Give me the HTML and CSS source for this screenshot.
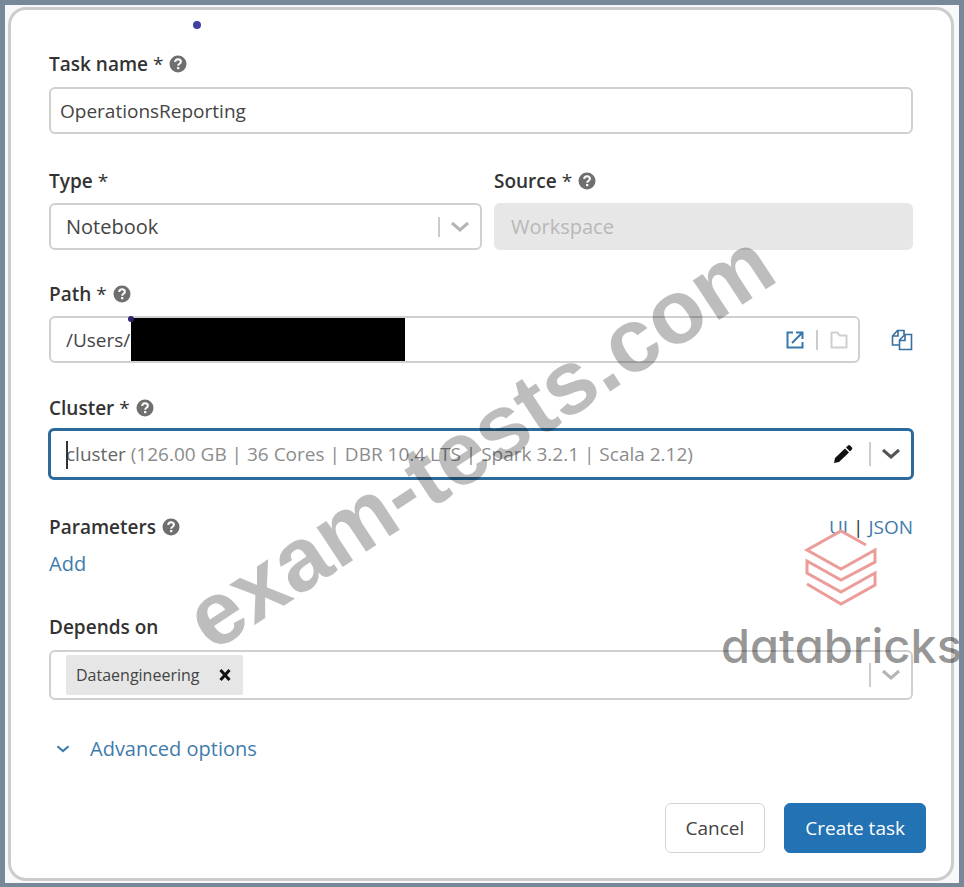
FILE: index.html
```html
<!DOCTYPE html>
<html lang="en">
<head>
<meta charset="utf-8">
<title>Create task</title>
<link rel="stylesheet" href="styles.css">
</head>
<body>
<svg class="defs" aria-hidden="true">
  <symbol id="help" viewBox="0 0 18 18">
    <circle cx="9" cy="9" r="8.5" fill="#6f6f6f"/>
    <path d="M6.2 7C6.3 5.1 7.4 4.3 9 4.3c1.700 0 2.900 1 2.900 2.500 0 2-2.700 2-2.700 3.900" fill="none" stroke="#fff" stroke-width="2"/>
    <rect x="8.100" y="12" width="2.200" height="2.200" fill="#fff"/>
  </symbol>
  <symbol id="chevron" viewBox="0 0 20 12">
    <path d="M2 2l8 7 8-7" fill="none" stroke="currentColor" stroke-width="3"/>
  </symbol>
</svg>
<main class="panel">
  <span class="dot"></span>
  <form class="form">
    <div class="field field-name">
      <div class="label-row"><label for="task-name">Task name <span class="star">*</span></label><svg class="help"><use href="#help"/></svg></div>
      <input class="control text-input" id="task-name" type="text" value="OperationsReporting">
    </div>

    <div class="columns">
      <div class="field">
        <div class="label-row"><label for="type">Type <span class="star">*</span></label></div>
        <div class="control">
          <select class="select" id="type"><option>Notebook</option></select>
          <span class="divider"></span><svg class="chevron"><use href="#chevron"/></svg>
        </div>
      </div>
      <div class="field">
        <div class="label-row"><label for="source">Source <span class="star">*</span></label><svg class="help"><use href="#help"/></svg></div>
        <div class="control control-disabled">
          <select class="select" id="source" disabled><option>Workspace</option></select>
        </div>
      </div>
    </div>

    <div class="field field-path">
      <div class="label-row"><label for="path">Path <span class="star">*</span></label><svg class="help"><use href="#help"/></svg></div>
      <div class="path-row">
        <div class="control">
          <input class="path-input" id="path" type="text" value="/Users/">
          <span class="redacted"><span class="dot-small"></span></span>
          <button class="icon-button push" type="button" aria-label="Open">
            <svg width="18" height="18" viewBox="0 0 18 18" fill="none" stroke="#3778ad" stroke-width="2"><path d="M7 1.500H1.500v15h15V11M10 1.500h6.500V8M16 2L6 12"/></svg>
          </button>
          <span class="divider"></span>
          <button class="icon-button" type="button" aria-label="Browse">
            <svg width="18" height="18" viewBox="0 0 18 18" fill="none" stroke="#cfcfcf" stroke-width="2"><path d="M1.500 16.500v-15h6l2 3h7v12z" stroke-linejoin="round"/></svg>
          </button>
        </div>
        <button class="icon-button" type="button" aria-label="Copy path">
          <svg width="22" height="22" viewBox="0 0 22 22" fill="none" stroke="#376f9f" stroke-width="1.600"><path d="M8 16H1.500V7l5-5.500H13V6M1.500 7H7V1.500M8.500 20.500V11L14 5.500h6.500v15zM8.500 11.500H14v-6"/></svg>
        </button>
      </div>
    </div>

    <div class="field field-cluster">
      <div class="label-row"><label for="cluster">Cluster <span class="star">*</span></label><svg class="help"><use href="#help"/></svg></div>
      <div class="control control-focus">
        <input class="combo-input" id="cluster" type="text" role="combobox" aria-expanded="false">
        <span class="combo-value"><span class="combo-name">cluster</span> (126.00 GB | 36 Cores | DBR 10.4 LTS | Spark 3.2.1 | Scala 2.12)</span>
        <button class="icon-button push" type="button" aria-label="Edit cluster">
          <svg width="20" height="20" viewBox="0 0 20 20" fill="#111"><path d="M1 19l1-5L12 4.500l4 4L6 18zM13 3.500l2-2q1-1 2 0l2 2q.8 1 0 1.800L17 7.500z"/></svg>
        </button>
        <span class="divider divider-wide"></span><svg class="chevron chevron-dark"><use href="#chevron"/></svg>
      </div>
    </div>

    <div class="parameters">
      <div class="label-row"><span>Parameters</span><svg class="help"><use href="#help"/></svg>
        <span class="modes"><a href="#ui">UI</a> | <a href="#json">JSON</a></span>
      </div>
      <a class="add" href="#add">Add</a>
    </div>

    <div class="field field-depends">
      <div class="label-row"><label for="depends">Depends on</label></div>
      <div class="control control-tags">
        <span class="tag">Dataengineering
          <button class="icon-button" type="button" aria-label="Remove Dataengineering"><svg width="12" height="12" viewBox="0 0 12 12" stroke="#111" stroke-width="3"><path d="M1.500 1l9 10M10.500 1l-9 10"/></svg></button>
        </span>
        <input class="tag-input" id="depends" type="text">
        <span class="divider divider-wide"></span><svg class="chevron"><use href="#chevron"/></svg>
      </div>
    </div>

    <a class="advanced" href="#advanced"><svg class="chevron-small"><use href="#chevron"/></svg>Advanced options</a>

    <div class="actions">
      <button class="button" type="button">Cancel</button>
      <button class="button button-primary" type="submit">Create task</button>
    </div>
  </form>
</main>
<svg class="overlay" viewBox="0 0 964 887" aria-hidden="true">
  <text class="watermark" transform="translate(212 653) rotate(-33.300)">exam-tests.com</text>
  <path d="M866 545L841 531L807 550L841 569L875 550V562L841 580L807 561V573L841 592L875 573V585L841 604L807 584" class="brand-mark"/>
  <text class="brand" x="721" y="663">databricks</text>
</svg>
</body>
</html>
```
FILE: styles.css
```css
* { box-sizing: border-box; }

body {
  margin: 0;
  min-height: 100vh;
  position: relative;
  padding: 2px 5px 2px 3px;
  border: 5px solid #778899;
  background: #f8f8f8;
  font: 20px/28px "Open Sans", "Noto Sans", sans-serif;
  color: #444;
}

.defs { display: none; }

input, select, button {
  margin: 0;
  padding: 0;
  border: 0;
  outline: 0;
  background: none;
  font: inherit;
  color: inherit;
}

a { color: #3f7cac; text-decoration: none; }

.panel {
  position: relative;
  padding: 40px 38px 25px;
  border: 3px solid #ccc;
  border-radius: 18px;
  background: #fff;
}

.dot {
  position: absolute;
  left: 182px;
  top: 11px;
  width: 8px;
  height: 8px;
  border-radius: 50%;
  background: #4040a0;
}

.form { display: flex; flex-direction: column; }

.field { display: flex; flex-direction: column; gap: 8px; min-width: 0; }
.field-name { gap: 9px; }

.label-row {
  display: flex;
  align-items: center;
  gap: 6px;
  height: 28px;
  font-size: 19px;
  font-weight: 600;
  color: #333;
}

.star { font-weight: 400; }
.help { width: 18px; height: 18px; }

.control {
  display: flex;
  align-items: center;
  width: 100%;
  min-width: 0;
  height: 47px;
  padding: 0 10px 0 15px;
  border: 2px solid #d0d0d0;
  border-radius: 6px;
  background: #fff;
}

.text-input { padding: 0 9px; font-size: 19px; }

.columns {
  display: grid;
  grid-template-columns: 433fr 419fr;
  gap: 12px;
  margin-top: 33px;
}

.select { flex: 1; min-width: 0; appearance: none; opacity: 1; }
.control-disabled { background: #e7e7e7; border-color: #e7e7e7; color: #b8b8b8; }

.divider { width: 2px; height: 20px; margin: 0 10px; background: #ccc; }
.divider-wide { height: 24px; }
.chevron { width: 20px; height: 12px; color: #b5b5b5; }
.chevron-dark { color: #555; }

.field-path { margin-top: 30px; }
.path-row { display: flex; align-items: center; gap: 31px; }
.path-row .control { flex: 1; }
.path-row .divider { margin: 0 12px; }
.path-input { width: 65px; font-size: 19px; }
.redacted { position: relative; width: 274px; height: 43px; background: #000; }

.dot-small {
  position: absolute;
  left: -3px;
  top: -2px;
  width: 6px;
  height: 6px;
  border-radius: 50%;
  background: #2b2470;
}

.icon-button { display: flex; flex: none; cursor: pointer; }
.push { margin-left: auto; }

.field-cluster { margin-top: 31px; gap: 6px; }

.control-focus {
  position: relative;
  height: 52px;
  width: auto;
  margin: 0 -1px;
  border: 3px solid #2b6a9b;
  color: #8c8c8c;
  font-size: 19px;
}

.combo-input {
  position: absolute;
  left: 15px;
  top: 10px;
  width: 80%;
  height: 28px;
  border-left: 2px solid #333;
}

.combo-name { color: #666; }
.combo-value { white-space: nowrap; }
.control-focus .divider { margin-left: 16px; }

.parameters { margin-top: 33px; display: flex; flex-direction: column; gap: 9px; }
.modes { margin-left: auto; font-weight: 400; }
.add { align-self: flex-start; }

.field-depends { margin-top: 35px; gap: 9px; }
.control-tags { height: 50px; }

.tag {
  display: flex;
  align-items: center;
  gap: 20px;
  height: 40px;
  padding: 0 12px 0 10px;
  border-radius: 2px;
  background: #e6e6e6;
  font-size: 16px;
}

.tag-input { flex: 1; min-width: 0; }

.advanced {
  display: flex;
  align-items: center;
  align-self: flex-start;
  gap: 20px;
  margin-top: 35px;
  padding-left: 7px;
}

.chevron-small { width: 14px; height: 10px; }

.actions {
  display: flex;
  justify-content: flex-end;
  gap: 19px;
  margin: 40px -13px 0 0;
}

.button {
  height: 50px;
  padding: 0 20px;
  border: 1px solid #d4d4d4;
  border-radius: 6px;
  background: #fff;
  font-size: 19px;
}

.button-primary {
  border-color: #2272b4;
  background: #2272b4;
  color: #fff;
}

.overlay {
  position: absolute;
  left: -5px;
  top: -5px;
  width: calc(100% + 10px);
  pointer-events: none;
}

.watermark { font: bold 90px "Liberation Sans", sans-serif; fill: #000; fill-opacity: .26; }
.brand { font: 500 47px Inter, sans-serif; font-feature-settings: "cv11"; fill: #000; fill-opacity: .43; }
.brand-mark { fill: none; stroke: #ec9d99; stroke-width: 3; }
```
